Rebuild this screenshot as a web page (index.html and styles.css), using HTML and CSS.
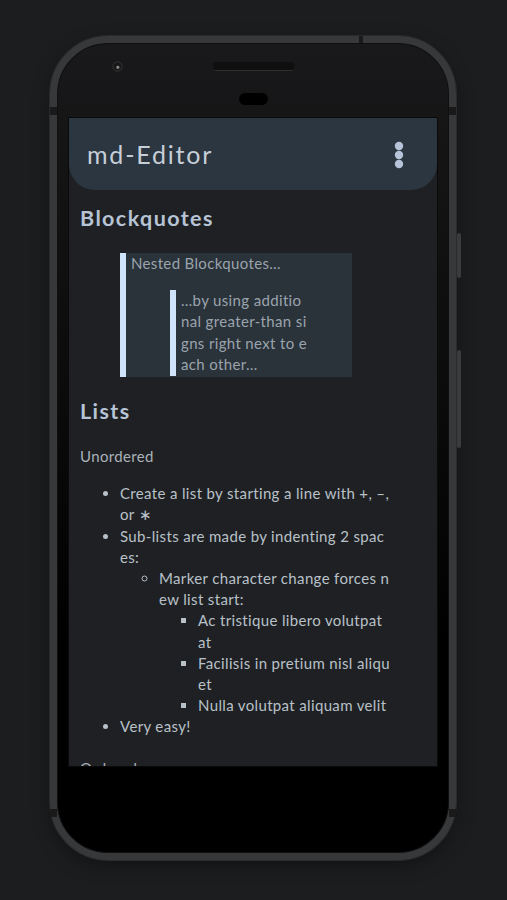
FILE: index.html
```html
<!DOCTYPE html>
<html lang="en">
<head>
<meta charset="utf-8">
<title>md-Editor</title>
<link rel="stylesheet" href="styles.css">
</head>
<body>
<div class="stage">
  <div class="phone">
    <span class="btn btn-power"></span>
    <span class="btn btn-volume"></span>
    <span class="antenna ant-tl"></span>
    <span class="antenna ant-tr"></span>
    <span class="antenna ant-bl"></span>
    <span class="antenna ant-br"></span>
    <span class="antenna ant-top"></span>

    <div class="bezel-top">
      <span class="camera"></span>
      <span class="speaker"></span>
      <span class="sensor"></span>
    </div>

    <div class="screen">
      <header class="appbar">
        <h1 class="app-title">md-Editor</h1>
        <svg class="menu" width="10" height="28" viewBox="0 0 10 28" aria-hidden="true">
          <circle cx="5" cy="5" r="4.2" fill="#b7c3d8"/>
          <circle cx="5" cy="14" r="4.2" fill="#b7c3d8"/>
          <circle cx="5" cy="23" r="4.2" fill="#b7c3d8"/>
        </svg>
      </header>

      <main class="content">
        <h2 class="heading">Blockquotes</h2>
        <blockquote class="quote">
          <p class="quote-text">Nested Blockquotes…</p>
          <blockquote class="quote quote-nested">
            <p class="quote-text">…by using additional greater-than signs right next to each other…</p>
          </blockquote>
        </blockquote>

        <h2 class="heading">Lists</h2>
        <p class="para">Unordered</p>
        <ul class="list">
          <li>Create a list by starting a line with +, –, or ∗</li>
          <li>Sub-lists are made by indenting 2 spaces:
            <ul class="list">
              <li>Marker character change forces new list start:
                <ul class="list">
                  <li>Ac tristique libero volutpat at</li>
                  <li>Facilisis in pretium nisl aliquet</li>
                  <li>Nulla volutpat aliquam velit</li>
                </ul>
              </li>
            </ul>
          </li>
          <li>Very easy!</li>
        </ul>
        <p class="para">Ordered</p>
      </main>
    </div>
  </div>
</div>
</body>
</html>
```

FILE: styles.css
```css
html, body {
  margin: 0;
  padding: 0;
}

body {
  background: #1c1d1f;
  font-family: Lato, "Noto Sans", sans-serif;
  width: 507px;
  height: 900px;
  overflow: hidden;
}

.stage {
  padding: 36px 0 0 50px;
}

.phone {
  position: relative;
  box-sizing: border-box;
  width: 406px;
  height: 824px;
  border: 7px solid #37383a;
  border-radius: 58px;
  background: linear-gradient(180deg, #19191b 0%, #151516 12%, #070707 55%, #000 75%);
  box-shadow: inset 0 0 0 1px #101011, 0 0 0 1px #2a2b2d, 0 6px 18px rgba(0, 0, 0, 0.35);
  display: flex;
  flex-direction: column;
}

.btn {
  position: absolute;
  left: 400px;
  width: 4px;
  border-radius: 2px;
  background: #3a3b3d;
}

.btn-power {
  top: 190px;
  height: 45px;
}

.btn-volume {
  top: 307px;
  height: 98px;
}

.antenna {
  position: absolute;
  background: #1a1a1b;
}

.ant-tl, .ant-tr, .ant-bl, .ant-br {
  width: 7px;
  height: 8px;
}

.ant-tl { left: -7px; top: 64px; }
.ant-tr { right: -7px; top: 64px; }
.ant-bl { left: -7px; top: 766px; }
.ant-br { right: -7px; top: 766px; }

.ant-top {
  top: -7px;
  left: 302px;
  width: 4px;
  height: 7px;
}

.bezel-top {
  position: relative;
  height: 75px;
  display: flex;
  flex-direction: column;
  align-items: center;
}

.camera {
  position: absolute;
  left: 55px;
  top: 18px;
  box-sizing: border-box;
  width: 11px;
  height: 11px;
  border-radius: 50%;
  border: 2px solid #262628;
  background: radial-gradient(circle at 55% 62%, #8a8a8a 0 1px, #1c1c1c 2px, #0b0b0b 100%);
}

.speaker {
  margin-top: 19px;
  width: 81px;
  height: 8px;
  border-radius: 3px;
  background: #0f0f10;
  border-bottom: 1px solid #2e2e30;
}

.sensor {
  margin-top: 22px;
  width: 29px;
  height: 12px;
  border-radius: 6px;
  background: #000;
}

.screen {
  margin: 0 12px;
  height: 648px;
  overflow: hidden;
  background: #1f2023;
  box-shadow: 0 0 0 1px #0a0a0a;
}

.appbar {
  height: 72px;
  box-sizing: border-box;
  background: #2b3640;
  border-radius: 0 0 26px 26px;
  display: flex;
  align-items: center;
  justify-content: space-between;
  padding: 0 33px 0 18px;
}

.app-title {
  margin: 0;
  font-size: 25px;
  font-weight: 400;
  letter-spacing: 1.8px;
  color: #c6cfd8;
}

.menu {
  display: block;
  margin-top: 2px;
}

.content {
  padding: 14px 45px 0 11px;
  color: #aab2ba;
  font-size: 15px;
  line-height: 21.2px;
  letter-spacing: 0.35px;
  word-break: break-all;
}

.heading {
  margin: 20px 0 21px;
  font-size: 21.5px;
  line-height: 28px;
  font-weight: 700;
  letter-spacing: 1.4px;
  color: #b6c4d5;
}

.heading:first-child {
  margin-top: 0;
}

.quote {
  margin: 0 40px;
  padding-left: 5px;
  padding-bottom: 1px;
  border-left: 6px solid #cfe4fa;
  background: #2a323a;
  color: #9aa4ad;
}

.quote-nested {
  margin: 16px 45px 0 39px;
  padding-bottom: 1px;
  background: transparent;
}

.quote-text {
  margin: 0;
}

.para {
  margin: 20px 0 16px;
}

.list {
  margin: 0;
  padding-left: 40px;
  color: #b8c0c8;
}

.list .list {
  padding-left: 39px;
}
```
